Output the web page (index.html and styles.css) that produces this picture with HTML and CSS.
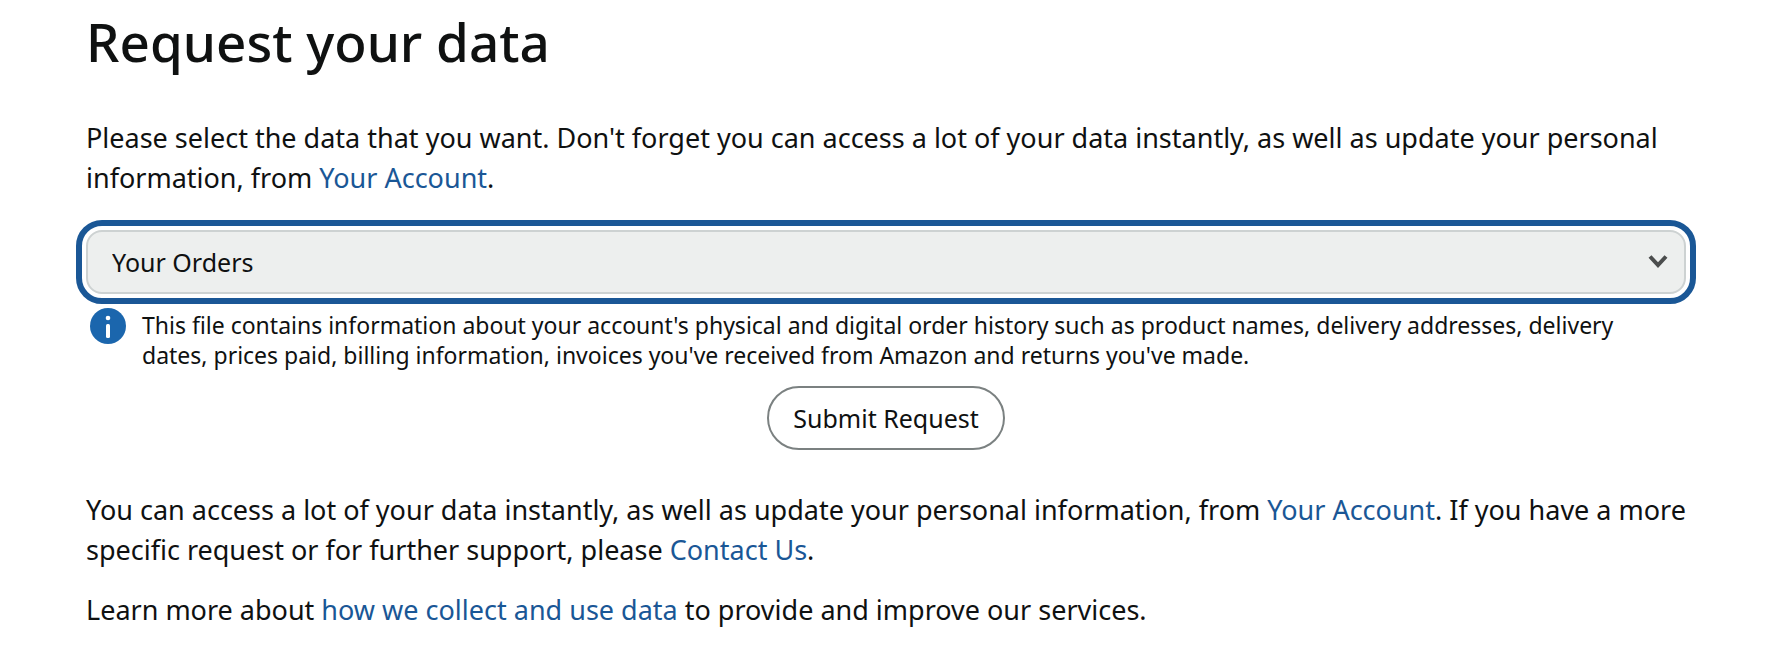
FILE: index.html
```html
<!DOCTYPE html>
<html lang="en">
<head>
    <meta charset="UTF-8">
    <meta name="viewport" content="width=device-width, initial-scale=1.0">
    <title>Request your data</title>
    <link rel="stylesheet" href="styles.css">
</head>
<body>
    <main class="container">
        <h1>Request your data</h1>
        <p class="intro">Please select the data that you want. Don't forget you can access a lot of your data instantly, as well as update your personal information, from <a href="#">Your Account</a>.</p>

        <form class="request-form">
            <div class="select-wrap">
                <select id="category" class="category" aria-label="Data category">
                    <option selected>Your Orders</option>
                </select>
                <svg class="arrow" viewBox="0 0 20 14" aria-hidden="true">
                    <path d="M2 1.5 L10 10 L18 1.5" fill="none" stroke="#4b4d4d" stroke-width="4"/>
                </svg>
            </div>
            <div class="info">
                <svg class="info-icon" viewBox="0 0 36 36" aria-hidden="true">
                    <circle cx="18" cy="18" r="18" fill="#1b66ad"/>
                    <circle cx="18" cy="10" r="2.3" fill="#fff"/>
                    <rect x="16" y="16" width="4" height="14" rx="1.5" fill="#fff"/>
                </svg>
                <label class="info-text" for="category">This file contains information about your account's physical and digital order history such as product names, delivery addresses, delivery dates, prices paid, billing information, invoices you've received from Amazon and returns you've made.</label>
            </div>
            <button type="button" class="submit">Submit Request</button>
        </form>

        <p>You can access a lot of your data instantly, as well as update your personal information, from <a href="#">Your Account</a>. If you have a more specific request or for further support, please <a href="#">Contact Us</a>.</p>
        <p>Learn more about <a href="#">how we collect and use data</a> to provide and improve our services.</p>
    </main>
</body>
</html>
```
FILE: styles.css
```css
body {
    margin: 0;
    background-color: #ffffff;
    color: #0f1111;
    font-family: "Noto Sans", sans-serif;
    font-size: 27px;
    line-height: 40px;
}
.container {
    padding: 6px 96px 24px 86px;
}
h1 {
    margin: 0 0 40px;
    font-size: 53px;
    font-weight: 500;
    line-height: 72px;
}
p {
    margin: 0 0 20px;
}
.intro {
    margin-bottom: 32px;
}
a {
    color: #1a5796;
    text-decoration: none;
}
a:hover {
    text-decoration: underline;
}
.request-form {
    display: flex;
    flex-direction: column;
    margin: 0 8px 40px 0;
}
.select-wrap {
    display: grid;
    align-items: center;
}
.category {
    grid-area: 1 / 1;
    appearance: none;
    width: 100%;
    height: 64px;
    padding: 0 60px 0 24px;
    border: 2px solid #cdd2d2;
    border-radius: 16px;
    outline: 6px solid #1a5796;
    outline-offset: 4px;
    background-color: #edefee;
    color: #0f1111;
    font-family: inherit;
    font-size: 25px;
}
.arrow {
    grid-area: 1 / 1;
    justify-self: end;
    width: 20px;
    height: 14px;
    margin-right: 18px;
    pointer-events: none;
}
.info {
    display: flex;
    gap: 16px;
    padding: 14px 40px 0 4px;
    font-size: 23px;
    line-height: 30px;
}
.info-icon {
    flex: none;
    width: 36px;
    height: 36px;
}
.info-text {
    padding-top: 2px;
}
.submit {
    align-self: center;
    height: 64px;
    margin-top: 16px;
    padding: 0 24px;
    border: 2px solid #7b8181;
    border-radius: 32px;
    background-color: #ffffff;
    color: #0f1111;
    font-family: inherit;
    font-size: 25px;
    cursor: pointer;
}
```
